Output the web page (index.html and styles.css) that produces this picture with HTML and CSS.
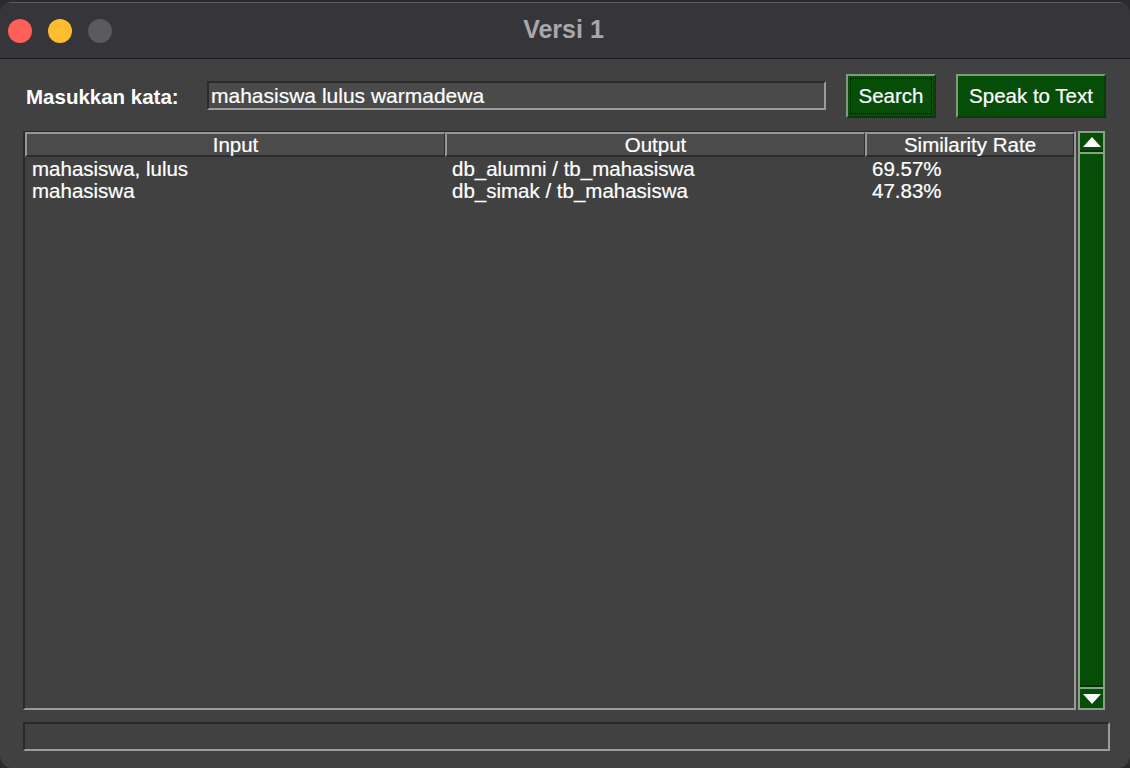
FILE: index.html
```html
<!DOCTYPE html>
<html>
<head>
<meta charset="utf-8">
<title>Versi 1</title>
<link rel="stylesheet" href="styles.css">
</head>
<body>
<div class="window">
  <div class="titlebar">
    <div class="lights">
      <span class="light red"></span>
      <span class="light yellow"></span>
      <span class="light gray"></span>
    </div>
    <div class="title">Versi 1</div>
  </div>
  <div class="content">
    <div class="toolbar">
      <label class="label">Masukkan kata:</label>
      <div class="entry">mahasiswa lulus warmadewa</div>
      <button class="btn btn-search"><span class="focus">Search</span></button>
      <button class="btn btn-speak">Speak to Text</button>
    </div>
    <div class="tablewrap">
      <div class="table">
        <div class="thead">
          <div class="th c1">Input</div>
          <div class="th c2">Output</div>
          <div class="th c3">Similarity Rate</div>
        </div>
        <div class="tr">
          <div class="td c1">mahasiswa, lulus</div>
          <div class="td c2">db_alumni / tb_mahasiswa</div>
          <div class="td c3">69.57%</div>
        </div>
        <div class="tr">
          <div class="td c1">mahasiswa</div>
          <div class="td c2">db_simak / tb_mahasiswa</div>
          <div class="td c3">47.83%</div>
        </div>
      </div>
      <div class="scrollbar">
        <div class="arrow up"><svg width="18" height="10" viewBox="0 0 18 10"><polygon points="9,0 18,10 0,10" fill="#fff"/></svg></div>
        <div class="trough"></div>
        <div class="arrow down"><svg width="18" height="10" viewBox="0 0 18 10"><polygon points="0,0 18,0 9,10" fill="#fff"/></svg></div>
      </div>
    </div>
    <div class="status"></div>
  </div>
</div>
</body>
</html>
```

FILE: styles.css
```css
html, body {
  margin: 0;
  padding: 0;
  width: 1130px;
  height: 768px;
  overflow: hidden;
  background: #2b2b2e;
  font-family: "Liberation Sans", Arial, sans-serif;
}

.window {
  width: 1130px;
  height: 766px;
  margin-top: 2px;
  background: #414141;
  border-radius: 12px 12px 12px 12px;
  overflow: hidden;
}

.titlebar {
  height: 55px;
  background: #363539;
  border-top: 1px solid #5d5c61;
  border-bottom: 1px solid #1c1c1e;
  display: flex;
  align-items: center;
  position: relative;
}

.lights {
  display: flex;
  gap: 16px;
  padding-left: 8px;
}

.light {
  width: 24px;
  height: 24px;
  border-radius: 50%;
  display: block;
}
.red { background: #fe5f57; }
.yellow { background: #febc2e; }
.gray { background: #5b5a5f; }

.title {
  position: absolute;
  left: 0;
  right: 0;
  top: 0;
  bottom: 2px;
  display: flex;
  align-items: center;
  justify-content: center;
  color: #a8a7ac;
  font-weight: bold;
  font-size: 25px;
  padding-right: 3px;
}

.content {
  padding: 15px 20px 0 23px;
  display: flex;
  flex-direction: column;
}

.toolbar {
  display: flex;
  align-items: center;
  height: 44px;
}

.label {
  color: #ffffff;
  font-weight: bold;
  font-size: 20.5px;
  margin-left: 3px;
  width: 181px;
  padding-top: 1px;
  white-space: nowrap;
}

.entry {
  width: 613px;
  height: 25px;
  background: #4a4a4a;
  border-top: 2px solid #2b2b2b;
  border-left: 2px solid #2b2b2b;
  border-bottom: 2px solid #9c9c9c;
  border-right: 2px solid #9c9c9c;
  color: #ffffff;
  font-size: 21px;
  line-height: 25px;
  padding-left: 2px;
  box-sizing: content-box;
  white-space: nowrap;
  margin-top: -1px;
  -webkit-text-stroke: 0.2px #ffffff;
}

.btn {
  height: 44px;
  background: #064d07;
  border: 2px solid #7c9d7c;
  border-right-color: #0b3a0b;
  border-bottom-color: #0b3a0b;
  color: #ffffff;
  font-family: "Liberation Sans", Arial, sans-serif;
  font-size: 20.5px;
  padding: 0;
  box-sizing: border-box;
  display: flex;
  align-items: center;
  justify-content: center;
  -webkit-text-stroke: 0.2px #ffffff;
}

.btn-search {
  width: 90px;
  margin-left: 20px;
  padding: 2px;
}

.focus {
  display: flex;
  align-items: center;
  justify-content: center;
  width: 100%;
  height: 100%;
  border: 1px dotted #000;
  box-sizing: border-box;
}

.btn-speak {
  width: 150px;
  margin-left: 20px;
}

.tablewrap {
  margin-top: 13px;
  display: flex;
  gap: 2px;
  height: 579px;
}

.table {
  width: 1053px;
  height: 579px;
  box-sizing: border-box;
  border-top: 1px solid #2a2a2a;
  border-left: 2px solid #2a2a2a;
  border-right: 2px solid #9a9a9a;
  border-bottom: 2px solid #9a9a9a;
  display: flex;
  flex-direction: column;
}

.thead {
  display: flex;
  height: 25px;
}

.th {
  box-sizing: border-box;
  background: #4b4b4b;
  border-top: 2px solid #969696;
  border-left: 2px solid #969696;
  border-right: 1px solid #2c2c2c;
  border-bottom: 2px solid #2c2c2c;
  color: #ffffff;
  font-size: 20.5px;
  line-height: 21px;
  text-align: center;
  white-space: nowrap;
  -webkit-text-stroke: 0.2px #ffffff;
}

.c1 { width: 420px; }
.c2 { width: 420px; }
.c3 { width: 209px; }

.tr {
  display: flex;
  height: 22px;
}

.td {
  box-sizing: border-box;
  color: #ffffff;
  font-size: 20.5px;
  line-height: 23px;
  padding-left: 7px;
  white-space: nowrap;
  -webkit-text-stroke: 0.2px #ffffff;
}

.scrollbar {
  width: 27px;
  height: 579px;
  box-sizing: border-box;
  background: #064d07;
  border: 2px solid #86a386;
  display: flex;
  flex-direction: column;
}

.arrow {
  height: 19px;
  display: flex;
  align-items: center;
  justify-content: center;
  box-sizing: border-box;
}

.arrow.up {
  border-bottom: 2px solid #053205;
}

.arrow.up svg { margin-top: 1px; }

.trough {
  flex: 1;
  border-top: 2px solid #86a386;
  border-bottom: 2px solid #053205;
}

.arrow.down {
  border-top: 2px solid #86a386;
  height: 21px;
}

.status {
  margin-top: 12px;
  width: 1087px;
  height: 29px;
  box-sizing: border-box;
  border-top: 2px solid #2a2a2a;
  border-left: 2px solid #2a2a2a;
  border-right: 2px solid #9c9c9c;
  border-bottom: 2px solid #9c9c9c;
}
```
